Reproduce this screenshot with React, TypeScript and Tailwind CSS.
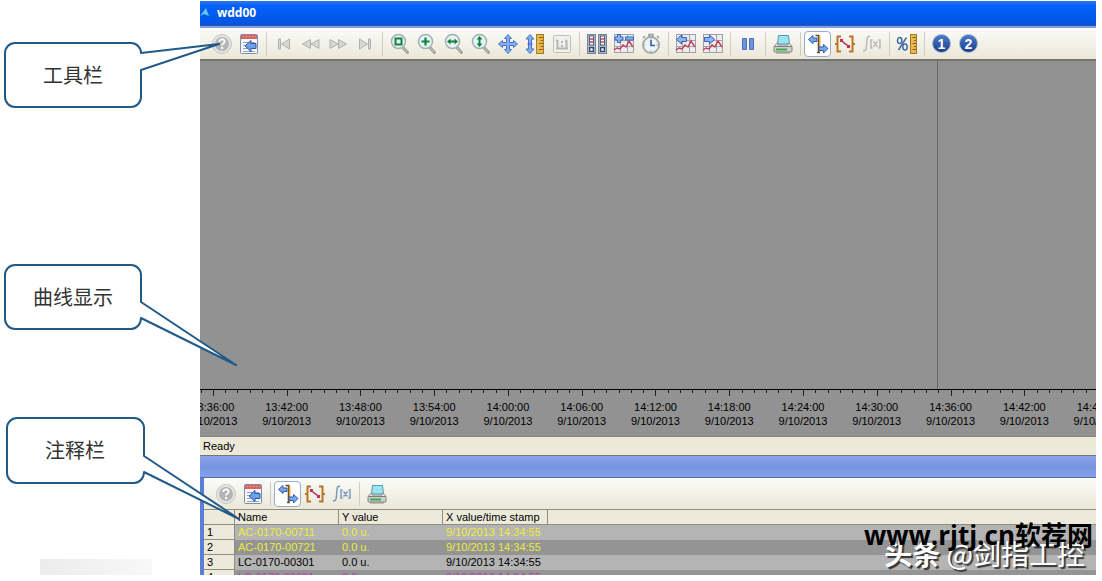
import type { ReactNode } from 'react'
import clsx from 'clsx'

type IconProps = { children: ReactNode }

function Icon({ children }: IconProps) {
  return (
    <svg viewBox="0 0 22 22" className="size-[22px]" fill="none" aria-hidden="true">
      {children}
    </svg>
  )
}

const HelpIcon = () => (
  <Icon>
    <circle cx="11" cy="11" r="9.5" fill="#e4e4e4" stroke="#c4c4c4" />
    <circle cx="11" cy="11" r="7" fill="#b4b4b4" />
    <path d="M8.3 9c0-3.6 5.4-3.4 5.4-.4 0 1.900-2.600 2-2.600 4" stroke="#fafafa" strokeWidth="1.900" />
    <circle cx="11.100" cy="15" r="1.200" fill="#fafafa" />
  </Icon>
)

const ConfigIcon = () => (
  <Icon>
    <rect x="2.500" y="1.500" width="17" height="19" rx="1" fill="#f6f8fc" stroke="#7a8fb5" />
    <rect x="3" y="2" width="16" height="4" fill="#e0605a" />
    <path d="M5 3.500h1m2 0h1m2 0h1m2 0h1m2 0h1" stroke="#f0a8a2" />
    <path d="M5 9.500h12M5 12.500h5M5 15.500h5M5 18.500h12" stroke="#9aa3b5" />
    <path d="M7 13l6-5.500V10.500h5v5h-5v3z" fill="#6da0ea" stroke="#2b59ab" />
  </Icon>
)

const FirstIcon = () => (
  <Icon>
    <path d="M5.500 6v10h2V6zM16.500 6v10l-8-5z" fill="#d6d6d3" stroke="#b0b0ad" />
  </Icon>
)

const BackIcon = () => (
  <Icon>
    <path d="M10.500 6.500v9L2.500 11zM19 6.500v9L11 11z" fill="#d6d6d3" stroke="#b0b0ad" />
  </Icon>
)

const ForwardIcon = () => (
  <Icon>
    <path d="M3 6.500v9l8-4.500zM11.500 6.500v9l8-4.500z" fill="#d6d6d3" stroke="#b0b0ad" />
  </Icon>
)

const LastIcon = () => (
  <Icon>
    <path d="M5.500 6v10l8-5zM14.500 6v10h2V6z" fill="#d6d6d3" stroke="#b0b0ad" />
  </Icon>
)

function Magnifier({ children }: IconProps) {
  return (
    <Icon>
      <path d="M13.500 14l5 5.500" stroke="#9a9a97" strokeWidth="3" strokeLinecap="round" />
      <path d="M14 14.500l4 4.500" stroke="#cfcfcc" strokeLinecap="round" />
      <circle cx="9.500" cy="8.500" r="7" fill="#e6f5f4" stroke="#9fb0b0" strokeWidth="1.500" />
      {children}
    </Icon>
  )
}

const ZoomAreaIcon = () => (
  <Magnifier>
    <rect x="6.500" y="5.500" width="6" height="6" stroke="#15803f" strokeWidth="2" />
  </Magnifier>
)

const ZoomInIcon = () => (
  <Magnifier>
    <path d="M9.500 4.500v8M5.500 8.500h8" stroke="#15803f" strokeWidth="2.200" />
  </Magnifier>
)

const ZoomTimeIcon = () => (
  <Magnifier>
    <path d="M4 8.500l3.500-3v2h4v-2l3.500 3-3.500 3v-2h-4v2z" fill="#15803f" />
  </Magnifier>
)

const ZoomValueIcon = () => (
  <Magnifier>
    <path d="M9.500 3l3 3.500h-2v4h2l-3 3.500-3-3.500h2v-4h-2z" fill="#15803f" />
  </Magnifier>
)

const MoveIcon = () => (
  <Icon>
    <path
      d="M11 1.500l3.500 4h-2v4h4v-2l4 3.500-4 3.500v-2h-4v4h2l-3.500 4-3.500-4h2v-4h-4v2l-4-3.500 4-3.500v2h4v-4h-2z"
      fill="#84aef0"
      stroke="#4673c6"
    />
  </Icon>
)

const AxisScaleIcon = () => (
  <Icon>
    <path
      d="M6 1.500l4 4.500H7.500v10H10l-4 4.500L2 16h2.500V6H2z"
      fill="#84aef0"
      stroke="#4673c6"
    />
    <path d="M3.500 11h5" stroke="#3a68bf" />
    <rect x="12.500" y="1.500" width="7" height="19" fill="#e8b84e" stroke="#a87822" />
    <path d="M19 4.500h-4M19 7.500h-2.500M19 10.500h-4M19 13.500h-2.500M19 16.500h-4" stroke="#8a6220" />
  </Icon>
)

const OriginalViewIcon = () => (
  <Icon>
    <rect x="2.500" y="2.500" width="17" height="17" rx="1" fill="#f0f0ed" stroke="#c0c0bd" />
    <path d="M6.500 7v8M5 7.500h1.500M5 15.500h12M15.500 7v8M14 7.500h1.500M11 8v2m0 2v2" stroke="#b6b6b3" strokeWidth="2" />
  </Icon>
)

const ServerIcon = () => (
  <Icon>
    {[1.5, 12.5].map((x) => (
      <g key={x}>
        <rect x={x} y="1.500" width="8" height="19" fill="#a9b4c8" stroke="#78849c" />
        <rect x={x + 2} y="3" width="4" height="9" fill="#fff" stroke="#59617a" />
        <path d={`M${x + 2} 6h4M${x + 2} 9h4`} stroke="#b8485c" strokeWidth="1.500" />
        <rect x={x + 1.5} y="14" width="5" height="5" fill="#3a4866" />
        <circle cx={x + 4} cy="16.500" r="1.500" fill="#dce6f7" />
      </g>
    ))}
  </Icon>
)

function TrendGrid({ children }: IconProps) {
  return (
    <Icon>
      <rect x="1.500" y="1.500" width="19" height="18" fill="#ececee" stroke="#a0a0a8" />
      <path d="M7.500 2v17M14.500 2v17M2 7.500h18M2 13.500h18" stroke="#a4a4ac" />
      <path d="M1 17l3-2 3 1 3-4 3 2 3-6 4 6" stroke="#c4405a" strokeWidth="1.400" />
      {children}
    </Icon>
  )
}

const SelectTrendIcon = () => (
  <TrendGrid>
    <path d="M4.500 1.500h3v2.500h2.500v3H7.500v2.500h-3V7H2V4h2.500zM12.500 4h8v3h-8z" fill="#8eb5f2" stroke="#3564bb" />
  </TrendGrid>
)

const PreviousTrendIcon = () => (
  <TrendGrid>
    <path d="M1.500 6.500l5-4.500v2.500h5v4h-5V11z" fill="#8eb5f2" stroke="#3564bb" />
  </TrendGrid>
)

const NextTrendIcon = () => (
  <TrendGrid>
    <path d="M12.500 6.500l-5-4.500v2.500h-5v4h5V11z" fill="#8eb5f2" stroke="#3564bb" />
  </TrendGrid>
)

const ClockIcon = () => (
  <Icon>
    <path d="M9 1.500h4v2H9zM3 5l2-2M19 5l-2-2" stroke="#9b9b97" strokeWidth="1.500" />
    <circle cx="11" cy="12" r="8" fill="#eef5f9" stroke="#a5abab" strokeWidth="2" />
    <path d="M11 7v5.500h4" stroke="#2f6197" strokeWidth="1.600" />
    <path d="M11 5.500v1M11 17.500v1M4.500 12h1M16.500 12h1" stroke="#74808a" />
  </Icon>
)

const PauseIcon = () => (
  <Icon>
    <path d="M5.500 5.500h4v11h-4zM12.500 5.500h4v11h-4z" fill="#6e93dc" stroke="#4c70bd" />
  </Icon>
)

const PrintIcon = () => (
  <Icon>
    <path d="M6.500 2.500h10l1 8.500h-12z" fill="#9fe3ee" stroke="#4c9fb8" />
    <path d="M4.500 10.500L2 13.500h18l-2.500-3h-1.500v1.500H6v-1.500z" fill="#e3e3df" stroke="#8d8d8b" />
    <rect x="2" y="13.500" width="18" height="5.500" rx="1" fill="#cfd1cf" stroke="#7d807f" />
    <path d="M4 16.500h11" stroke="#3eab46" strokeWidth="2" />
    <path d="M4 20h14" stroke="#8d8d8b" />
  </Icon>
)

const RulerIcon = () => (
  <Icon>
    <path d="M8.500 2.500h4M11.500 2.500v17M10 19.500h3" stroke="#6a4d22" strokeWidth="1.500" />
    <path d="M12.700 3v16" stroke="#dca24a" strokeWidth="1.500" />
    <path d="M1.500 6.500l4.500-4v2.500h4v3.500H6V10.500z" fill="#79a7ee" stroke="#2e5cae" />
    <path d="M21 15.500l-4.500-4V14H12v3.500h4.500V20z" fill="#79a7ee" stroke="#2e5cae" />
  </Icon>
)

const StatisticsAreaIcon = () => (
  <Icon>
    <path d="M7 3.500H3.500v15H7M15 3.500h3.500v15H15M1 11h2.500M18.500 11H21" stroke="#b5742c" strokeWidth="2" />
    <path d="M4.500 5v12M17.500 5v12" stroke="#e5b668" />
    <path d="M7 7l3 3 2.500 1.500L15 14" stroke="#bd3062" strokeWidth="1.500" />
    <path d="M6 6h3v3H6zM13 12h3v3h-3z" fill="#bd3062" />
  </Icon>
)

function FunctionIcon({ active }: { active?: boolean }) {
  return (
    <Icon>
      <path
        d="M9 3.500c-2-1-2.800.5-3 3l-.7 8c-.2 2.500-1 4-3.300 3M11.500 7H10v8h1.500M17.500 7H19v8h-1.500M12.500 8.500l4 5M16.500 8.500l-4 5"
        stroke={active ? '#7494b8' : '#b5b5b1'}
        strokeWidth="1.400"
      />
    </Icon>
  )
}

const PercentIcon = () => (
  <Icon>
    <ellipse cx="3.700" cy="7.500" rx="2.200" ry="3" stroke="#426ba8" strokeWidth="1.500" />
    <ellipse cx="9" cy="14" rx="2.200" ry="3" stroke="#426ba8" strokeWidth="1.500" />
    <path d="M10.500 4.500L2.500 17" stroke="#426ba8" strokeWidth="1.500" />
    <rect x="14.500" y="1.500" width="6" height="19" fill="#e8b84e" stroke="#a87822" />
    <path d="M20 4.500h-3.500M20 7.500h-2M20 10.500h-3.500M20 13.500h-2M20 16.500h-3.500" stroke="#8a6220" />
  </Icon>
)

function NumberIcon({ value }: { value: string }) {
  return (
    <span className="flex size-[19px] items-center justify-center rounded-full border border-[#9fb3d4] bg-linear-to-b from-[#4c7cc8] to-[#173f8c] font-['Liberation_Sans'] text-sm font-bold text-white">
      {value}
    </span>
  )
}

type Tool = { label: string; icon?: ReactNode; pressed?: boolean; disabled?: boolean }

const separator: Tool = { label: '' }

const trendTools: Tool[] = [
  { label: 'Help', icon: <HelpIcon />, disabled: true },
  { label: 'Configuration', icon: <ConfigIcon /> },
  separator,
  { label: 'First record', icon: <FirstIcon />, disabled: true },
  { label: 'Previous record', icon: <BackIcon />, disabled: true },
  { label: 'Next record', icon: <ForwardIcon />, disabled: true },
  { label: 'Last record', icon: <LastIcon />, disabled: true },
  separator,
  { label: 'Zoom area', icon: <ZoomAreaIcon /> },
  { label: 'Zoom in and out', icon: <ZoomInIcon /> },
  { label: 'Zoom time axis', icon: <ZoomTimeIcon /> },
  { label: 'Zoom value axis', icon: <ZoomValueIcon /> },
  { label: 'Move trend area', icon: <MoveIcon /> },
  { label: 'Move axes area', icon: <AxisScaleIcon /> },
  { label: 'Original view', icon: <OriginalViewIcon />, disabled: true },
  separator,
  { label: 'Select data connection', icon: <ServerIcon /> },
  { label: 'Select trends', icon: <SelectTrendIcon /> },
  { label: 'Select time range', icon: <ClockIcon /> },
  separator,
  { label: 'Previous trend', icon: <PreviousTrendIcon /> },
  { label: 'Next trend', icon: <NextTrendIcon /> },
  separator,
  { label: 'Stop', icon: <PauseIcon /> },
  separator,
  { label: 'Print', icon: <PrintIcon /> },
  separator,
  { label: 'Ruler', icon: <RulerIcon />, pressed: true },
  { label: 'Select statistics area', icon: <StatisticsAreaIcon /> },
  { label: 'Calculate statistics', icon: <FunctionIcon />, disabled: true },
  separator,
  { label: 'Relative axis', icon: <PercentIcon /> },
  separator,
  { label: 'User button 1', icon: <NumberIcon value="1" /> },
  { label: 'User button 2', icon: <NumberIcon value="2" /> },
]

const rulerTools: Tool[] = [
  { label: 'Help', icon: <HelpIcon />, disabled: true },
  { label: 'Configuration', icon: <ConfigIcon /> },
  separator,
  { label: 'Ruler', icon: <RulerIcon />, pressed: true },
  { label: 'Statistics area', icon: <StatisticsAreaIcon /> },
  { label: 'Statistics', icon: <FunctionIcon active /> },
  separator,
  { label: 'Print', icon: <PrintIcon /> },
]

function Toolbar({ tools, label }: { tools: Tool[]; label: string }) {
  return (
    <div
      role="toolbar"
      aria-label={label}
      className="flex h-[31px] items-center bg-linear-to-b from-[#fbfbf9] to-[#ebe8d8] pl-2"
    >
      {tools.map((tool, i) =>
        tool.icon ? (
          <button
            key={i}
            type="button"
            aria-label={tool.label}
            aria-pressed={tool.pressed}
            disabled={tool.disabled}
            className={clsx(
              'flex h-[26px] w-[27px] shrink-0 items-center justify-center rounded-sm border',
              tool.pressed ? 'border-[#94add0] bg-white' : 'border-transparent',
            )}
          >
            {tool.icon}
          </button>
        ) : (
          <span key={i} className="flex w-2 shrink-0 justify-center">
            <span className="h-6 w-px bg-[#cfccbd]" />
          </span>
        ),
      )}
    </div>
  )
}

const times = [
  '13:36:00',
  '13:42:00',
  '13:48:00',
  '13:54:00',
  '14:00:00',
  '14:06:00',
  '14:12:00',
  '14:18:00',
  '14:24:00',
  '14:30:00',
  '14:36:00',
  '14:42:00',
  '14:48:00',
]

function TimeAxis() {
  return (
    <div className="h-[47px] overflow-hidden border-t border-black bg-[#929292]">
      <div className="-mr-[39px] -ml-6 flex">
        {times.map((time) => (
          <div key={time} className="flex-1 text-center leading-[14px]">
            <div className="flex h-[10px] items-start">
              {[0, 1, 2, 3, 4, 5].map((tick) => (
                <span
                  key={tick}
                  className={clsx('flex-1 border-l border-[#222]', tick === 3 ? 'h-[6px]' : 'h-[3px]')}
                />
              ))}
            </div>
            <div>{time}</div>
            <div>9/10/2013</div>
          </div>
        ))}
      </div>
    </div>
  )
}

const rows = [
  { name: 'AC-0170-00711', style: 'bg-[#b4b4b4] text-[#ecec3a]' },
  { name: 'AC-0170-00721', style: 'bg-[#949494] text-[#ecec3a]' },
  { name: 'LC-0170-00301', style: 'bg-[#b4b4b4] text-black' },
  { name: 'LC-0170-00801', style: 'bg-[#949494] text-[#b83cb8]' },
]

function RulerTable() {
  return (
    <div className="h-[66px] overflow-hidden border-t border-[#8f8d80]">
      <table className="w-full table-fixed border-separate border-spacing-0 text-left leading-[14px]">
        <colgroup>
          <col className="w-[31px]" />
          <col className="w-[104px]" />
          <col className="w-[104px]" />
          <col className="w-[105px]" />
          <col />
        </colgroup>
        <thead className="bg-[#edeadb]">
          <tr>
            <td className="border-r border-b border-[#8f8d80]" />
            {['Name', 'Y value', 'X value/time stamp'].map((heading) => (
              <th
                key={heading}
                scope="col"
                className="border-r border-b border-[#8f8d80] pl-[3px] font-normal whitespace-nowrap"
              >
                {heading}
              </th>
            ))}
            <td className="border-b border-[#8f8d80]" />
          </tr>
        </thead>
        <tbody>
          {rows.map((row, i) => (
            <tr key={row.name} className={clsx('align-top', row.style)}>
              <th
                scope="row"
                className="border-r border-b border-[#8f8d80] bg-[#edeadb] pl-[3px] font-normal text-black"
              >
                {i + 1}
              </th>
              <td className="pl-[3px]">{row.name}</td>
              <td className="pl-[3px]">0.0 u.</td>
              <td className="pl-[3px] whitespace-nowrap">9/10/2013 14:34:55</td>
              <td />
            </tr>
          ))}
        </tbody>
      </table>
    </div>
  )
}

function Callout({ text, outline, className }: { text: string; outline: string; className: string }) {
  return (
    <div className={clsx('relative flex h-[66px] w-[138px] items-center justify-center', className)}>
      <svg className="absolute inset-0 size-full overflow-visible" aria-hidden="true">
        <path d={outline} fill="#fff" stroke="#215a87" strokeWidth="2" strokeLinejoin="round" />
      </svg>
      <span className="relative font-['Noto_Sans_CJK_SC',sans-serif] text-xl text-[#333]">{text}</span>
    </div>
  )
}

export default function App() {
  return (
    <div className="relative flex bg-white pr-[6px] font-['Liberation_Sans',sans-serif] text-[11px] text-black">
      <aside className="relative z-10 flex w-[200px] shrink-0 flex-col">
        <Callout
          text="工具栏"
          className="mt-[42px] ml-1"
          outline="M11 1H127a10 10 0 0 1 10 10L215 2L137 28V55a10 10 0 0 1-10 10H11a10 10 0 0 1-10-10V11a10 10 0 0 1 10-10z"
        />
        <Callout
          text="曲线显示"
          className="mt-[156px] ml-1"
          outline="M11 1H127a10 10 0 0 1 10 10V38L232 101L137 54a10 11 0 0 1-10 11H11a10 10 0 0 1-10-10V11a10 10 0 0 1 10-10z"
        />
        <Callout
          text="注释栏"
          className="mt-[87px] ml-[6px]"
          outline="M11 1H128a10 10 0 0 1 10 10V39L233 102L138 55a10 11 0 0 1-10 11H11a10 10 0 0 1-10-10V11a10 10 0 0 1 10-10z"
        />
        <div className="mt-auto mr-12 ml-10 h-4 bg-linear-to-r from-[#ececec] to-[#f8f8f8]" />
      </aside>

      <main className="min-w-0 flex-1 overflow-hidden pt-px">
        <section aria-label="wdd00">
          <header className="flex h-6 items-center gap-[7px] bg-linear-to-b from-[#2a74ee] via-[#0460fa] via-20% to-[#0455e0]">
            <svg viewBox="0 0 10 12" className="h-3 w-[10px]" aria-hidden="true">
              <path d="M0 9L6 1l3 8-5-2z" fill="#62c8ee" />
            </svg>
            <h1 className="font-['Noto_Sans',sans-serif] text-xs font-bold text-white">wdd00</h1>
          </header>
          <div className="h-[3px] border-t border-[#3156a8] bg-[#7f9fe4]" />
          <Toolbar tools={trendTools} label="Trend toolbar" />
          <div className="relative h-[330px] border-t-2 border-[#74746c] bg-[#929292]">
            <div className="absolute inset-y-0 left-[82.3%] w-px bg-[#666]" />
          </div>
          <TimeAxis />
          <footer className="h-5 border-y border-t-[#85857c] border-b-[#77776e] bg-[#ece9d8] px-[3px] leading-[18px]">
            Ready
          </footer>
        </section>

        <section aria-label="Ruler window" className="border-l-4 border-[#5b7fd6]">
          <div className="-ml-1 h-[22px] border-b border-[#566cae] bg-linear-to-b from-[#8aa5ea] via-[#7794df] to-[#83a0ea]" />
          <Toolbar tools={rulerTools} label="Ruler toolbar" />
          <RulerTable />
        </section>
      </main>

      <div className="absolute right-[9px] bottom-0 z-20 flex flex-col items-end font-['Open_Sans','Noto_Sans_CJK_SC',sans-serif] whitespace-nowrap">
        <p className="relative z-10 -mb-[18px] text-[26px] leading-7 font-bold text-black">www.rjtj.cn软荐网</p>
        <p className="mr-2 font-['Noto_Sans_CJK_SC',sans-serif] text-[28px] leading-[44px] text-white [text-shadow:2px_2px_1px_#333]">
          <span className="font-bold">头条</span> @剑指工控
        </p>
      </div>
    </div>
  )
}
